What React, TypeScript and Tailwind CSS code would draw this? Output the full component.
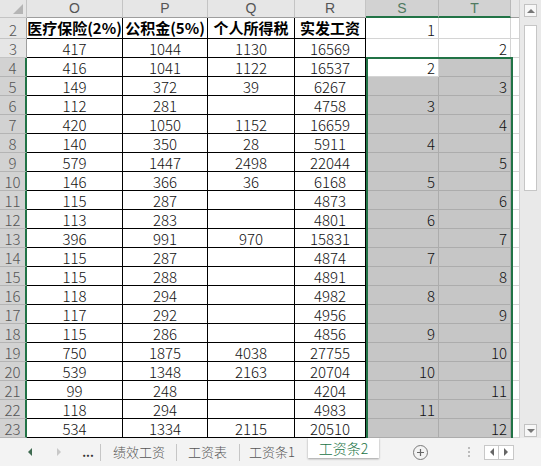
import React from "react";

const body: (string | number)[][] = [
  [417, 1044, 1130, 16569],
  [416, 1041, 1122, 16537],
  [149, 372, 39, 6267],
  [112, 281, "", 4758],
  [420, 1050, 1152, 16659],
  [140, 350, 28, 5911],
  [579, 1447, 2498, 22044],
  [146, 366, 36, 6168],
  [115, 287, "", 4873],
  [113, 283, "", 4801],
  [396, 991, 970, 15831],
  [115, 287, "", 4874],
  [115, 288, "", 4891],
  [118, 294, "", 4982],
  [117, 292, "", 4956],
  [115, 286, "", 4856],
  [750, 1875, 4038, 27755],
  [539, 1348, 2163, 20704],
  [99, 248, "", 4204],
  [118, 294, "", 4983],
  [534, 1334, 2115, 20510],
];

function Corner() {
  return (
    <div className="flex items-end justify-end border-r border-b border-[#c4c4c4] bg-[#e6e6e6] pb-[3px] pr-[3px]">
      <div className="h-0 w-0 border-l-[10px] border-b-[10px] border-l-transparent border-b-[#b5b5b5]" />
    </div>
  );
}

function ColHead({ label, sel }: { label: string; sel?: boolean }) {
  if (sel) {
    return (
      <div className="flex items-center justify-center border-r border-[#b8b8b8] border-b-2 border-b-[#217346] bg-[#d2d2d2] font-['Liberation_Sans',sans-serif] text-[14px] leading-[16px] text-[#4f7a60]">
        {label}
      </div>
    );
  }
  return (
    <div className="flex items-center justify-center border-r border-b border-[#c4c4c4] border-b-[#9e9e9e] bg-[#e6e6e6] font-['Liberation_Sans',sans-serif] text-[14px] leading-[17px] text-[#555]">
      {label}
    </div>
  );
}

function RowHead({ n }: { n: number }) {
  if (n >= 4) {
    return (
      <div className="flex items-end justify-center border-b border-[#b4b4b4] border-r-2 border-r-[#217346] bg-[#d2d2d2] text-[15px] font-light leading-[17px] text-[#555]">
        {n}
      </div>
    );
  }
  return (
    <div className="flex items-end justify-center border-b border-r border-[#c4c4c4] border-r-[#9e9e9e] bg-[#e6e6e6] text-[15px] font-light leading-[17px] text-[#555]">
      {n}
    </div>
  );
}

function DataCell({ v, bold }: { v: string | number; bold?: boolean }) {
  return (
    <div
      className={
        bold
          ? "flex items-end justify-center whitespace-nowrap border-r border-b border-black bg-white pb-[1px] text-[15px] font-bold leading-[18px] text-black"
          : "flex items-end justify-center whitespace-nowrap border-r border-b border-black bg-white text-[15px] font-light leading-[17px] text-[#111]"
      }
    >
      {v}
    </div>
  );
}

function SelCell({ v, mode }: { v: string | number; mode: "white" | "gray" }) {
  return (
    <div
      className={
        mode === "gray"
          ? "flex items-end justify-end border-r border-b border-[#acacac] bg-[#c6c6c6] pr-[3px] text-[15px] font-light leading-[17px] text-[#111]"
          : "flex items-end justify-end border-r border-b border-[#d4d4d4] bg-white pr-[3px] text-[15px] font-light leading-[17px] text-[#111]"
      }
    >
      {v}
    </div>
  );
}

function UCell() {
  return <div className="border-b border-[#d4d4d4] bg-white" />;
}

function Grid() {
  const cells: React.ReactNode[] = [];
  cells.push(<Corner key="c" />);
  ["O", "P", "Q", "R"].forEach((l) => cells.push(<ColHead key={l} label={l} />));
  cells.push(<ColHead key="S" label="S" sel />);
  cells.push(<ColHead key="T" label="T" sel />);
  cells.push(<div key="U" className="border-b border-[#9e9e9e] bg-[#e6e6e6]" />);

  cells.push(<RowHead key="r2" n={2} />);
  ["医疗保险(2%)", "公积金(5%)", "个人所得税", "实发工资"].forEach((h) =>
    cells.push(<DataCell key={h} v={h} bold />)
  );
  cells.push(<SelCell key="s2" v={1} mode="white" />);
  cells.push(<SelCell key="t2" v="" mode="white" />);
  cells.push(<UCell key="u2" />);

  body.forEach((row, i) => {
    const n = i + 3;
    cells.push(<RowHead key={"r" + n} n={n} />);
    row.forEach((v, j) => cells.push(<DataCell key={n + "-" + j} v={v} />));
    const sVal = n % 2 === 0 ? n / 2 : "";
    const tVal = n % 2 === 1 ? (n + 1) / 2 : "";
    const sMode = n === 3 || n === 4 ? "white" : "gray";
    const tMode = n === 3 ? "white" : "gray";
    cells.push(<SelCell key={"s" + n} v={sVal} mode={sMode} />);
    cells.push(<SelCell key={"t" + n} v={tVal} mode={tMode} />);
    cells.push(<UCell key={"u" + n} />);
  });

  return (
    <div className="relative h-[438px] w-[519px] overflow-hidden">
      <div className="grid grid-cols-[27px_96px_85px_87px_71px_73px_72px_8px] grid-rows-[18px_21px_repeat(21,19px)]">
        {cells}
      </div>
      <div className="pointer-events-none absolute left-[366px] top-[57px] h-[400px] w-[147px] border-2 border-[#217346]" />
    </div>
  );
}

function VScroll() {
  return (
    <div className="flex h-[438px] w-[22px] flex-col items-center border-l border-[#d0d0d0] bg-[#e9e9e9] pt-[4px] pb-[1px]">
      <div className="flex h-[13px] w-[13px] items-center justify-center border border-[#c2c2c2] bg-[#f7f7f7]">
        <div className="h-0 w-0 border-x-[4px] border-b-[4px] border-x-transparent border-b-[#777]" />
      </div>
      <div className="mt-[8px] h-[166px] w-[13px] border border-[#c6c6c6] bg-white" />
      <div className="flex-1" />
      <div className="flex h-[13px] w-[13px] items-center justify-center border border-[#c2c2c2] bg-[#f7f7f7]">
        <div className="h-0 w-0 border-x-[4px] border-t-[4px] border-x-transparent border-t-[#777]" />
      </div>
    </div>
  );
}

function Sep() {
  return <div className="h-[17px] w-px bg-[#c6c6c6]" />;
}

function TabBar() {
  return (
    <div className="flex h-[28px] w-[541px] items-center bg-[#f3f3f3] text-[13px] font-light text-[#555]">
      <div className="ml-[28px] h-0 w-0 border-y-[4px] border-r-[4px] border-y-transparent border-r-[#3f6a50]" />
      <div className="ml-[25px] h-0 w-0 border-y-[4px] border-l-[4px] border-y-transparent border-l-[#c8c8c8]" />
      <div className="ml-[21px] w-[12px] text-center text-[12px] font-bold leading-none text-[#333]">...</div>
      <div className="ml-[6px]">
        <Sep />
      </div>
      <div className="ml-[12px] w-[52px] whitespace-nowrap">绩效工资</div>
      <div className="ml-[11px]">
        <Sep />
      </div>
      <div className="ml-[11px] w-[42px] whitespace-nowrap">工资表</div>
      <div className="ml-[9px]">
        <Sep />
      </div>
      <div className="ml-[9px] w-[48px] whitespace-nowrap">工资条1</div>
      <div className="ml-[11px] flex h-[20px] w-[71px] self-start items-center justify-center bg-white text-[14px] text-[#217346] shadow-[0_1px_2px_rgba(0,0,0,0.35)]">
        工资条2
      </div>
      <div className="ml-[34px] flex h-[15px] w-[15px] items-center justify-center rounded-full border border-[#7a7a7a]">
        <svg width="9" height="9" viewBox="0 0 9 9">
          <path d="M4.5 1v7M1 4.5h7" stroke="#666" strokeWidth="1.2" />
        </svg>
      </div>
      <div className="ml-[40px] flex flex-col gap-[2px]">
        <div className="h-[2px] w-[2px] bg-[#bbb]" />
        <div className="h-[2px] w-[2px] bg-[#bbb]" />
        <div className="h-[2px] w-[2px] bg-[#bbb]" />
      </div>
      <div className="ml-[14px] flex h-[15px] border border-[#c8c8c8] bg-white">
        <div className="flex w-[14px] items-center justify-center border-r border-[#c8c8c8]">
          <div className="h-0 w-0 border-y-[4px] border-r-[4px] border-y-transparent border-r-[#666]" />
        </div>
        <div className="flex w-[14px] items-center justify-center">
          <div className="h-0 w-0 border-y-[4px] border-l-[4px] border-y-transparent border-l-[#666]" />
        </div>
      </div>
    </div>
  );
}

export default function App() {
  return (
    <div
      className="h-[466px] w-[541px] overflow-hidden bg-white"
      style={{ fontFamily: '"Noto Sans CJK SC", "Noto Sans", sans-serif' }}
    >
      <div className="flex">
        <Grid />
        <VScroll />
      </div>
      <TabBar />
    </div>
  );
}
